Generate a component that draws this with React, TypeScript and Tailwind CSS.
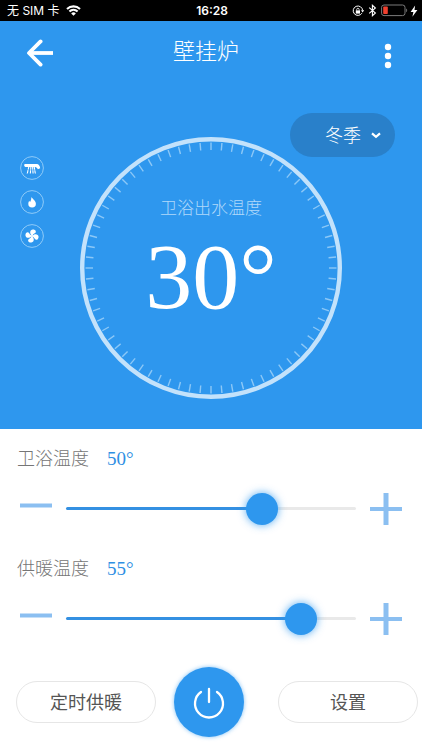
import React, { useState } from 'react';

const TICKS = Array.from({ length: 72 }, (_, i) => i * 5);

function StatusBar() {
  return (
    <div className="relative flex h-[21px] items-center justify-between bg-black pl-[7px] pr-1 font-['Inter','Noto_Sans_CJK_SC',sans-serif] text-white">
      <div className="flex items-center gap-1.5">
        <span className="text-[12px] leading-5">无 SIM 卡</span>
        <svg width="15" height="11" viewBox="0 0 15 11" fill="none" stroke="currentColor" strokeWidth="2.1">
          <path d="M1 4a9.4 9.4 0 0 1 13 0" />
          <path d="M3.4 6.5a6 6 0 0 1 8.2 0" />
          <path d="M7.5 10.8 5.2 8.4a3.4 3.4 0 0 1 4.6 0z" fill="currentColor" stroke="none" />
        </svg>
      </div>
      <span className="absolute inset-x-0 pl-0.5 text-center text-[12px] font-semibold leading-5">16:28</span>
      <div className="flex items-center">
        {/* rotation lock */}
        <svg width="12" height="12" viewBox="0 0 12 12" fill="none" stroke="currentColor">
          <path d="M9.9 8.2A4.7 4.7 0 1 1 10.6 5.4" />
          <path d="M9 5.2h3.2L10.6 7.4z" fill="currentColor" stroke="none" />
          <rect x="3.8" y="5.4" width="4.2" height="3.2" fill="currentColor" stroke="none" />
          <path d="M4.7 5.6V4.5a1.2 1.2 0 0 1 2.4 0v1.1" strokeWidth="0.8" />
        </svg>
        <svg className="ml-1" width="9" height="13" viewBox="0 0 9 13" fill="none" stroke="currentColor" strokeWidth="1.1">
          <path d="M1.2 3.7 7.4 9 4.4 11.7V1.3L7.4 4 1.2 9.3" />
        </svg>
        <svg className="ml-1" width="27" height="13" viewBox="0 0 27 13" fill="none">
          <rect x="0.6" y="1" width="23.4" height="10.6" rx="2.4" stroke="#7b7b7b" />
          <rect x="2.2" y="2.6" width="4.6" height="7.4" rx="0.8" fill="#f0402f" />
          <path d="M25.2 4.6v3.6c1.3-.5 1.3-3.1 0-3.6z" fill="#7b7b7b" />
        </svg>
        <svg className="ml-0.5" width="8" height="12" viewBox="0 0 8 12" fill="currentColor">
          <path d="M5.1.4.6 6.9h2.8L2.4 11.8 7.4 4.9H4.5z" />
        </svg>
      </div>
    </div>
  );
}

function Header() {
  return (
    <header className="flex h-16 items-center justify-between pl-5 pr-[18px] text-white">
      <button type="button" aria-label="返回" className="flex h-10 w-10 items-center justify-center">
        <svg width="28" height="28" viewBox="0 0 28 28" fill="none" stroke="currentColor" strokeWidth="3.8">
          <path d="M27 14H3" />
          <path d="M14.6 2.4 3 14l11.6 11.6" strokeLinecap="round" strokeLinejoin="round" />
        </svg>
      </button>
      <h1 className="pb-0.5 pr-5 text-[22px] font-light leading-8">壁挂炉</h1>
      <button type="button" aria-label="更多" className="flex h-10 w-8 items-center justify-center">
        <svg width="8" height="32" viewBox="0 0 8 32" fill="currentColor">
          <circle cx="4" cy="10" r="3.2" />
          <circle cx="4" cy="19" r="3.2" />
          <circle cx="4" cy="28" r="3.2" />
        </svg>
      </button>
    </header>
  );
}

function StatusIcons() {
  return (
    <div className="flex flex-col gap-2.5 pl-5 pt-[19px] text-white">
      <svg width="24" height="24" viewBox="0 0 24 24" fill="none">
        <circle cx="12" cy="12" r="11.4" stroke="#8fcbf8" />
        <path d="M4.6 8h12.2c1.8 0 3.2 2 3.4 4.2l-2.3 1.1c-.6-1.4-1.5-2.4-2.8-2.4H5.4c-1.2 0-1.6-1.8-.8-2.9z" fill="currentColor" />
        <path d="M8.8 10.8 7.2 18M10.9 10.8l-.6 7.2M12.6 10.8l.5 7.2M14.2 10.8l1.2 7.2" stroke="currentColor" strokeWidth="1.1" strokeDasharray="3 0.5" />
      </svg>
      <svg width="24" height="24" viewBox="0 0 24 24" fill="none">
        <circle cx="12" cy="12" r="11.4" stroke="#8fcbf8" />
        <path d="M11.2 6.8c.6 1.7 4.7 3.8 4.7 7a3.8 3.8 0 0 1-7.6 0c0-1.3.4-2.2 1-3 .2.6.4.9.8 1.1.9-1.6 1.5-3.3 1.1-5.1z" fill="currentColor" />
      </svg>
      <svg width="24" height="24" viewBox="0 0 24 24" fill="none">
        <circle cx="12" cy="12" r="11.4" stroke="#8fcbf8" />
        {[0, 90, 180, 270].map((angle) => (
          <path
            key={angle}
            d="M11.4 11.3C8.8 9.8 8.7 6.1 11.4 5.4c3-.7 4.3 1.7 3 3.1-.9.9-1.8 1.4-1.8 2.8z"
            fill="currentColor"
            transform={`rotate(${angle + 12} 12 12)`}
          />
        ))}
        <circle cx="12" cy="12" r="1" fill="currentColor" />
      </svg>
    </div>
  );
}

function Dial({ value }: { value: number }) {
  return (
    <div className="relative h-[262px]">
      <svg className="h-full w-full" viewBox="0 0 262 262" fill="none">
        <circle cx="131" cy="131" r="128.8" stroke="#c3e2fb" strokeWidth="4.4" />
        {TICKS.map((angle) => (
          <path key={angle} d="M131 5.5v7.5" stroke="#8cc8f7" strokeWidth="1.4" transform={`rotate(${angle} 131 131)`} />
        ))}
      </svg>
      <div className="absolute inset-0 flex flex-col items-center pt-[60px]">
        <p className="text-[17px] font-light leading-6 text-[#b0d9fa]">卫浴出水温度</p>
        <p className="mt-1 font-['Liberation_Serif',serif] text-[94px] leading-[102px] text-white">{value}°</p>
      </div>
    </div>
  );
}

interface TemperatureControlProps {
  id: string;
  label: string;
  initial: number;
}

function TemperatureControl({ id, label, initial }: TemperatureControlProps) {
  const min = 27;
  const max = 60;
  const [value, setValue] = useState(initial);
  const fill = `${((value - min) / (max - min)) * 100}%`;

  return (
    <div>
      <div className="flex items-center gap-[18px] pl-[17px] leading-7">
        <label htmlFor={id} className="text-[18px] font-light text-[#757575]">{label}</label>
        <output htmlFor={id} className="font-['Liberation_Serif',serif] text-[19px] text-[#2f8fe3]">{value}°</output>
      </div>
      <div className="mt-5 flex h-8 items-center gap-3.5 px-5">
        <button type="button" aria-label={`${label} -`} onClick={() => setValue(Math.max(min, value - 1))} className="h-8 w-8 shrink-0">
          <svg width="32" height="32" viewBox="0 0 32 32" fill="#8bbff1">
            <rect y="10.5" width="32" height="4" />
          </svg>
        </button>
        <input
          id={id}
          type="range"
          min={min}
          max={max}
          value={value}
          onChange={(e) => setValue(Number(e.target.value))}
          style={{ '--fill': fill } as React.CSSProperties}
          className="h-8 min-w-0 flex-1 appearance-none bg-transparent pb-0.5 [&::-webkit-slider-runnable-track]:h-[3px] [&::-webkit-slider-runnable-track]:rounded-full [&::-webkit-slider-runnable-track]:bg-[linear-gradient(to_right,#3490e2_var(--fill),#e9e9e9_var(--fill))] [&::-webkit-slider-thumb]:-mt-3.5 [&::-webkit-slider-thumb]:h-8 [&::-webkit-slider-thumb]:w-8 [&::-webkit-slider-thumb]:appearance-none [&::-webkit-slider-thumb]:rounded-full [&::-webkit-slider-thumb]:bg-[#2e97ee] [&::-webkit-slider-thumb]:shadow-[0_0_8px_#2e97eecc]"
        />
        <button type="button" aria-label={`${label} +`} onClick={() => setValue(Math.min(max, value + 1))} className="h-8 w-8 shrink-0">
          <svg width="32" height="32" viewBox="0 0 32 32" fill="#8bbff1">
            <rect y="14" width="32" height="4" />
            <rect x="13.5" width="5" height="32" />
          </svg>
        </button>
      </div>
    </div>
  );
}

export default function App() {
  const [mode, setMode] = useState('冬季');

  return (
    <div className="min-h-screen bg-white font-['Liberation_Sans','Noto_Sans_CJK_SC',sans-serif]">
      <StatusBar />

      <section className="relative bg-[#2e97ee] pb-[30px]">
        <Header />
        <div className="grid grid-cols-[1fr_262px_1fr] pt-[52px]">
          <StatusIcons />
          <Dial value={30} />
        </div>

        {/* Season selector floats over the dial's corner */}
        <div className="absolute right-[27px] top-[92px] h-11 w-[105px] rounded-full bg-[#2980ca] text-white">
          <select
            aria-label="模式"
            value={mode}
            onChange={(e) => setMode(e.target.value)}
            className="h-full w-full appearance-none rounded-full bg-transparent pl-[35px] pt-0.5 text-[18px] font-light"
          >
            <option>冬季</option>
            <option>夏季</option>
          </select>
          <svg className="pointer-events-none absolute right-3.5 top-[19px]" width="10" height="8" viewBox="0 0 10 8" fill="none" stroke="currentColor" strokeWidth="2.2">
            <path d="m1 1.4 4 3.4 4-3.4" />
          </svg>
        </div>
      </section>

      <main className="pb-3 pt-4">
        <div className="flex flex-col gap-[30px]">
          <TemperatureControl id="bath" label="卫浴温度" initial={50} />
          <TemperatureControl id="heating" label="供暖温度" initial={55} />
        </div>

        <div className="mt-8 flex items-center pl-4 pr-1 text-[18px] text-[#555555]">
          <button type="button" className="h-[42px] flex-1 rounded-full border border-[#e6e6e6] pt-0.5">定时供暖</button>
          <button
            type="button"
            aria-label="电源"
            className="ml-[18px] mr-[34px] flex h-[70px] w-[70px] items-center justify-center rounded-full bg-[#2e97ee] text-white shadow-[0_0_4px_#2e97ee99]"
          >
            <svg width="34" height="34" viewBox="0 0 34 34" fill="none" stroke="currentColor" strokeWidth="2.3" strokeLinecap="round">
              <path d="M9 7a14 14 0 1 0 16 0" />
              <path d="M17 4v13" />
            </svg>
          </button>
          <button type="button" className="h-[42px] flex-1 rounded-full border border-[#e6e6e6] pt-0.5">设置</button>
        </div>
      </main>
    </div>
  );
}
